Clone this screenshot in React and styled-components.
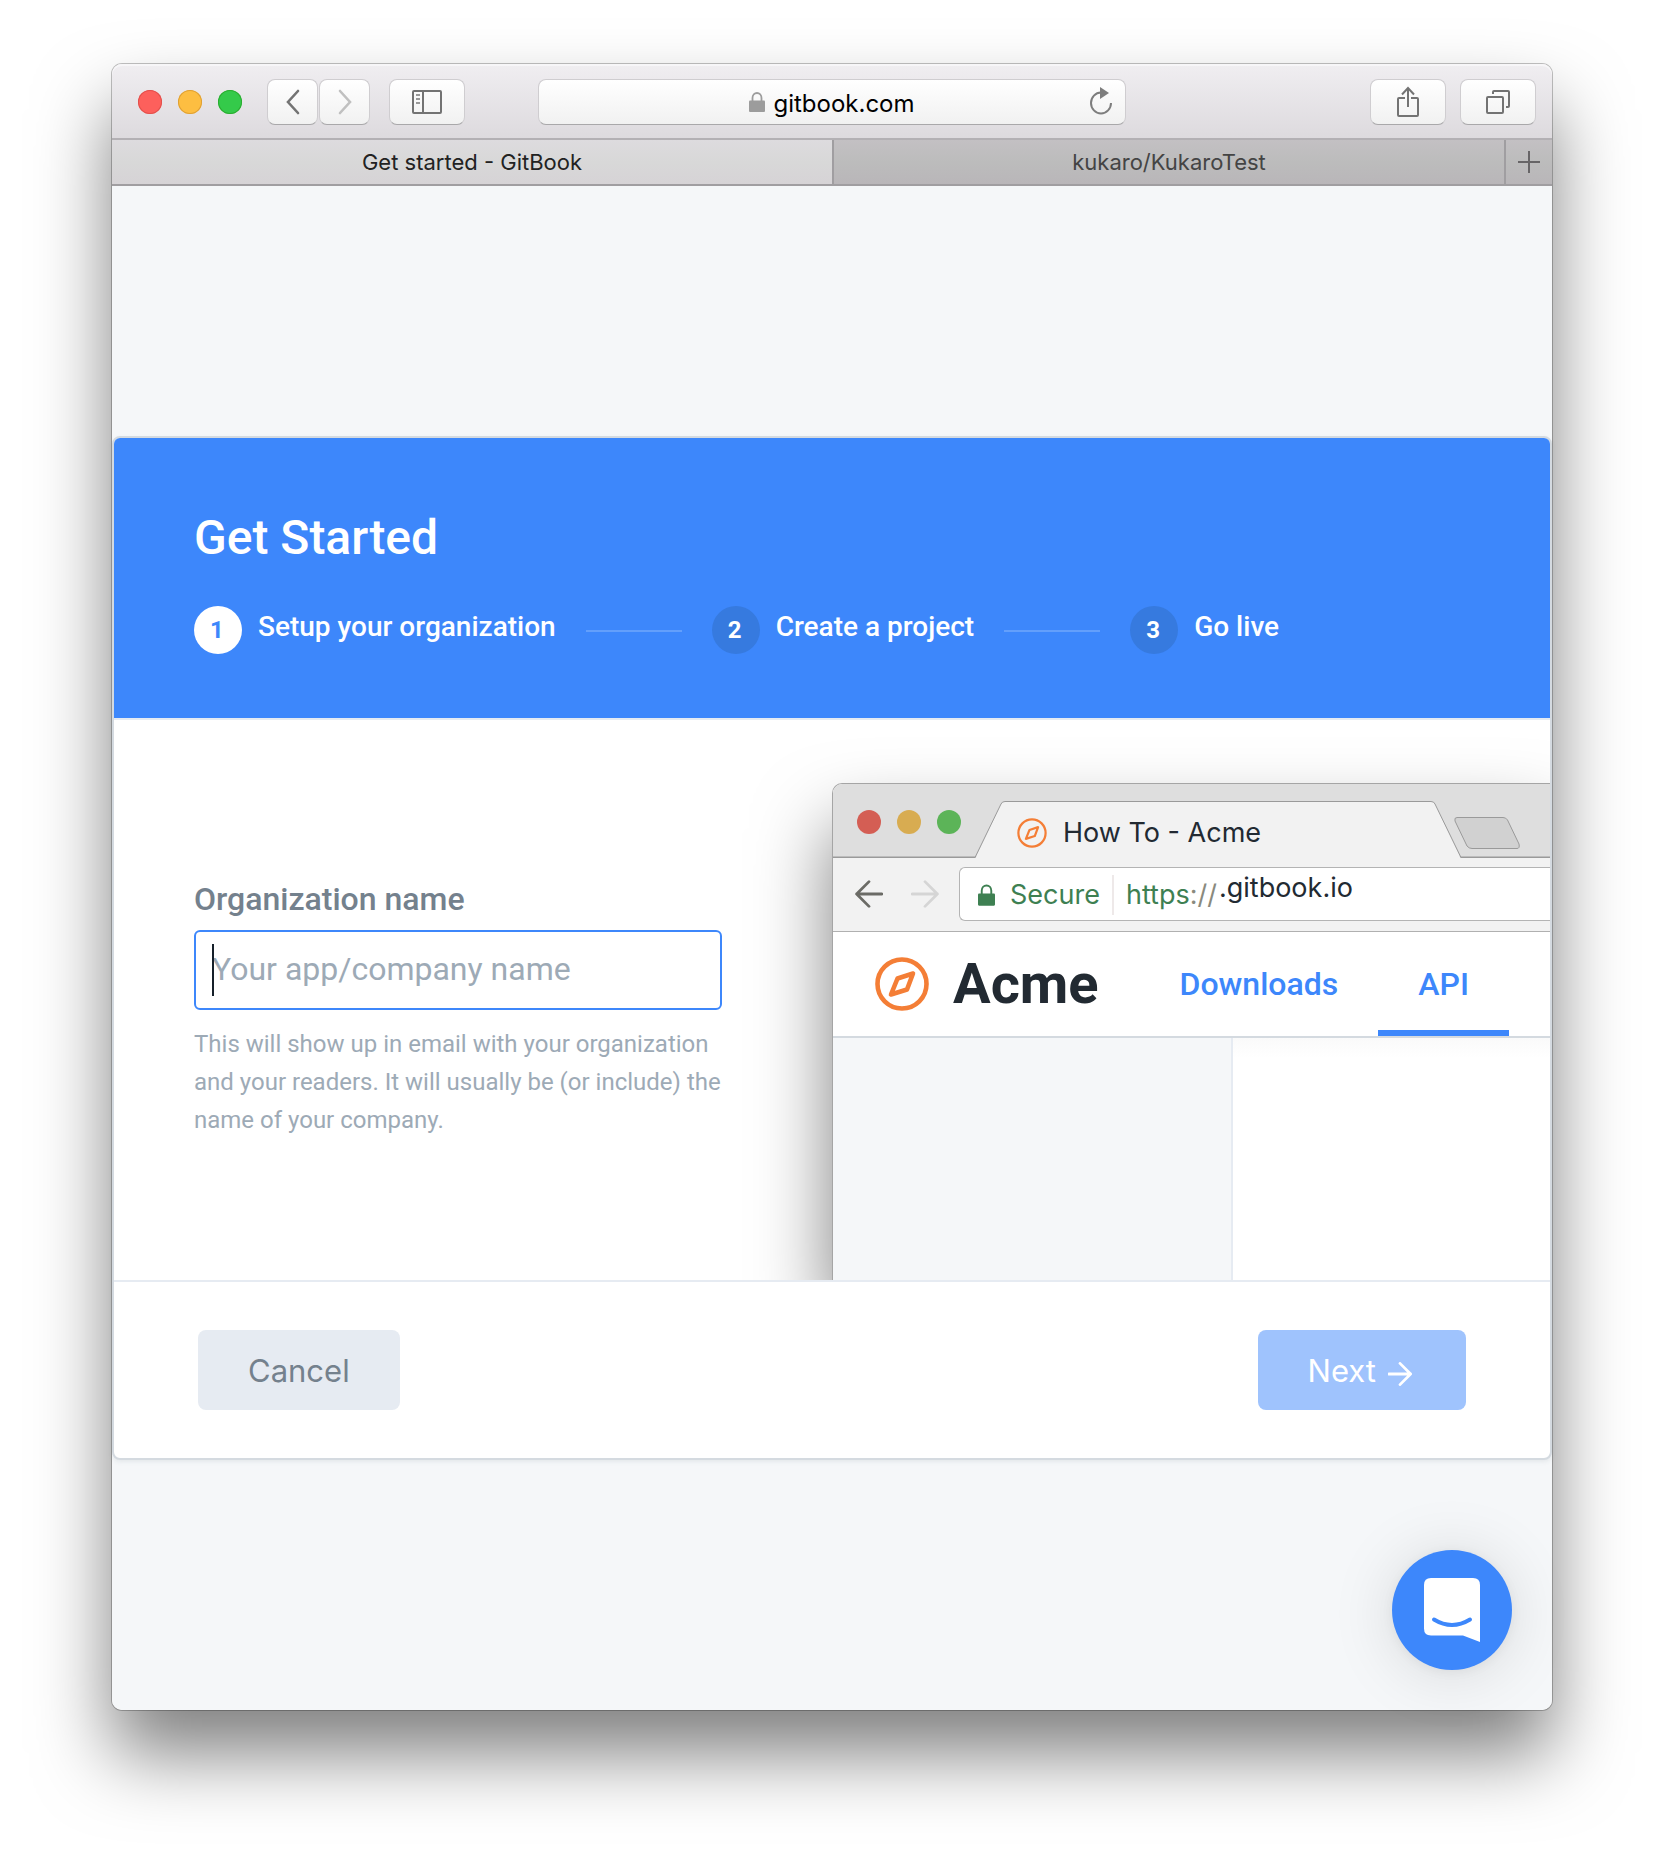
import React from "react";
import styled, { createGlobalStyle } from "styled-components";

const system = `Inter, "Liberation Sans", sans-serif`;
const roboto = `Roboto, "Liberation Sans", sans-serif`;
const blue = "#3d87fb";
const line = "#d4dae0";
const softLine = "#e6ebf2";
const windowShadow = "0 44px 76px rgba(0, 0, 0, 0.5)";

const GlobalStyle = createGlobalStyle`
  *, *::before, *::after { box-sizing: border-box; }
  body { margin: 0; background: #fff; font-family: ${roboto}; color: #222a32; }
  button { border: 0; padding: 0; margin: 0; font: inherit; color: inherit; background: none; cursor: pointer; }
  svg { display: block; flex: none; }
  ol { list-style: none; margin: 0; padding: 0; }
  h1, p { margin: 0; }
`;

/* ---------- desktop window ---------- */

const Desktop = styled.div`
  padding: 64px 112px 160px;
`;

const Window = styled.div`
  position: relative;
  border-radius: 10px;
  box-shadow: 0 0 0 1px rgba(0, 0, 0, 0.24), ${windowShadow};
`;

const Toolbar = styled.header`
  display: flex;
  align-items: center;
  height: 76px;
  padding: 2px 16px 0;
  border-radius: 10px 10px 0 0;
  border-bottom: 2px solid #b3b0b4;
  background: linear-gradient(#f0eef1, #dddade);
  box-shadow: inset 0 2px 0 #f7f6f8;
`;

const ToolbarSide = styled.div`
  flex: 1;
  display: flex;
  align-items: center;
  justify-content: ${(p) => (p.$end ? "flex-end" : "flex-start")};
  gap: ${(p) => (p.$end ? 14 : 0)}px;
`;

const Lights = styled.div`
  display: flex;
  gap: 16px;
  margin-left: 10px;
`;

const Light = styled.button`
  width: 24px;
  height: 24px;
  border-radius: 50%;
  background: ${(p) => p.$color};
  box-shadow: inset 0 0 0 1px ${(p) => p.$rim};
`;

const NavPair = styled.div`
  display: flex;
  gap: 1px;
  margin: 0 19px 0 25px;
`;

const ToolButton = styled.button`
  display: flex;
  align-items: center;
  justify-content: center;
  width: ${(p) => (p.$wide ? 76 : 51)}px;
  height: 46px;
  border: 1px solid #cfcdd0;
  border-bottom-color: #a9a8aa;
  border-radius: 8px;
  background: linear-gradient(#fff, #f1f1f1);
  color: ${(p) => (p.$dim ? "#c0c0c0" : "#737373")};
`;

const AddressBar = styled.div`
  position: relative;
  flex: 0 1 588px;
  display: flex;
  height: 46px;
  border: 1px solid #cfcdd0;
  border-bottom-color: #a9a8aa;
  border-radius: 8px;
  background: linear-gradient(#fff, #f1f1f1);
`;

const Address = styled.button`
  flex: 1;
  display: flex;
  align-items: center;
  justify-content: center;
  gap: 8px;
  color: #000;
  font: 400 24px/40px ${system};
`;

const AddressText = styled.span`
  padding-top: 4px;
`;

const Reload = styled.button`
  position: absolute;
  top: 0;
  right: 12px;
  height: 44px;
`;

const TabBar = styled.div`
  display: flex;
  height: 46px;
  border-bottom: 2px solid #a09ea1;
  background: linear-gradient(#c3c0c3, #bcbcbc 50%, #b9b6b9);
`;

const Tab = styled.button`
  flex: ${(p) => (p.$active ? "0 0 50%" : "1")};
  color: ${(p) => (p.$active ? "#222" : "#444")};
  background: ${(p) => (p.$active ? "linear-gradient(#dddbde, #d8d8d8 50%, #d6d3d6)" : "none")};
  border-left: ${(p) => (p.$active ? "0" : "2px solid #a09ea1")};
  font: 400 22px/44px ${system};
`;

const NewTab = styled.button`
  display: flex;
  align-items: center;
  justify-content: center;
  width: 48px;
  border-left: 2px solid #a09ea1;
`;

const Viewport = styled.main`
  padding: 250px 0;
  background: #f5f7f9;
  border-radius: 0 0 10px 10px;
`;

/* ---------- setup card ---------- */

const Card = styled.form`
  border: 2px solid ${line};
  border-radius: 8px;
  background: #fff;
  overflow: hidden;
  box-shadow: 0 2px 4px rgba(116, 129, 141, 0.12);
`;

const Hero = styled.div`
  height: 282px;
  padding: 68px 80px 0;
  background: ${blue};
  border-bottom: 2px solid ${softLine};
  color: #fff;
`;

const Title = styled.h1`
  font: 500 48px/64px ${roboto};
`;

const Steps = styled.ol`
  display: flex;
  align-items: center;
  margin-top: 36px;
`;

const Step = styled.li`
  display: flex;
  align-items: center;

  & + &::before {
    content: "";
    width: 96px;
    height: 2px;
    margin: 2px 30px 0;
    background: rgba(255, 255, 255, 0.2);
  }
`;

const StepNumber = styled.span`
  width: 48px;
  height: 48px;
  margin-right: 16px;
  padding-right: 2px;
  border-radius: 50%;
  background: ${(p) => (p.$current ? "#fff" : "#367adf")};
  color: ${(p) => (p.$current ? blue : "#fff")};
  text-align: center;
  font: 700 24px/48px ${roboto};
`;

const StepLabel = styled.span`
  padding-bottom: 6px;
  font: 500 28px/40px ${roboto};
`;

const Body = styled.div`
  display: flex;
  height: 560px;
  overflow: hidden;
`;

const FormColumn = styled.div`
  flex: none;
  width: 50%;
  padding: 156px 110px 0 80px;
`;

const Label = styled.label`
  display: block;
  color: #74818d;
  font: 500 32px/46px ${roboto};
`;

const Field = styled.div`
  position: relative;
  margin-top: 8px;
`;

const TextInput = styled.input`
  display: block;
  width: 100%;
  height: 80px;
  padding: 0 16px 2px;
  border: 2px solid ${blue};
  border-radius: 6px;
  outline: 0;
  background: #fff;
  color: #222a32;
  caret-color: transparent;
  font: 400 32px/48px ${roboto};

  &::placeholder {
    color: #9daab6;
    opacity: 1;
  }
`;

const Caret = styled.span`
  position: absolute;
  left: 18px;
  top: 14px;
  width: 2px;
  height: 52px;
  background: #16202a;
`;

const Help = styled.p`
  margin-top: 15px;
  color: #9daab6;
  font: 400 24px/38px ${roboto};
`;

const Footer = styled.div`
  display: flex;
  align-items: center;
  justify-content: space-between;
  height: 178px;
  padding: 0 84px;
  border-top: 2px solid ${softLine};
`;

const ActionButton = styled.button`
  display: flex;
  align-items: center;
  gap: 12px;
  height: 80px;
  padding: 2px 50px 0;
  border-radius: 8px;
  background: ${(p) => (p.$primary ? "#9fc3fd" : softLine)};
  color: ${(p) => (p.$primary ? "#fff" : "#74818d")};
  font: 400 31px/40px ${system};

  svg { margin: 6px 4px 0 0; }
`;

/* ---------- preview browser ---------- */

const Preview = styled.div`
  flex: 1 0 auto;
  width: 50%;
  margin-top: 63px;
  border: 1px solid #a5a5a5;
  border-width: 1px 0 0 1px;
  border-radius: 10px 0 0 0;
  background: #fff;
  box-shadow: ${windowShadow};
`;

const PreviewTabs = styled.div`
  display: flex;
  height: 74px;
  border-radius: 9px 0 0 0;
  background: linear-gradient(#dedede, #dedede 72px, #9a9a9a 73px);
`;

const PreviewLights = styled.div`
  display: flex;
  gap: 16px;
  padding: 26px 0 0 24px;
`;

const Dot = styled.span`
  width: 24px;
  height: 24px;
  border-radius: 50%;
  background: ${(p) => p.$color};
`;

const PreviewTab = styled.div`
  position: relative;
  width: 486px;
  height: 74px;
  margin-left: 14px;
`;

const TabShape = styled.svg`
  position: absolute;
  inset: 0;
`;

const TabTitle = styled.div`
  position: relative;
  display: flex;
  align-items: center;
  gap: 16px;
  padding: 31px 0 0 42px;
  font: 400 27px/36px ${system};
`;

const GhostTab = styled.svg`
  margin: 32px 0 0 -8px;
`;

const PreviewToolbar = styled.div`
  display: flex;
  align-items: center;
  gap: 28px;
  height: 74px;
  padding: 0 0 2px 22px;
  border-bottom: 1px solid #b0b0b0;
  background: #f2f2f2;
`;

const PreviewUrl = styled.div`
  flex: 1;
  display: flex;
  align-items: center;
  height: 54px;
  margin-left: -8px;
  padding: 2px 0 0 18px;
  border: 1px solid #b4b4b4;
  border-right: 0;
  border-radius: 6px 0 0 6px;
  background: #fff;
  font: 400 27px/40px ${system};
`;

const Secure = styled.span`
  margin-left: 15px;
  padding-right: 12px;
  border-right: 2px solid #eee9e9;
  color: #3e8052;
`;

const Scheme = styled.span`
  margin-left: 12px;
  color: #3e8052;

  i { font-style: normal; color: #8a8a7e; }
`;

const Host = styled.span`
  padding: 0 0 14px 2px;
`;

const Site = styled.div`
  display: flex;
  align-items: stretch;
  height: 106px;
  padding-left: 42px;
  border-bottom: 2px solid ${line};
`;

const Brand = styled.div`
  display: flex;
  align-items: center;
  gap: 24px;
  margin-right: 41px;
  font: 700 56px/104px ${roboto};
`;

const SiteLink = styled.a`
  padding: 0 40px;
  border-bottom: 6px solid ${(p) => (p.$active ? blue : "transparent")};
  color: ${blue};
  text-decoration: none;
  font: 500 32px/104px ${roboto};
`;

const SiteBody = styled.div`
  display: flex;
  height: 260px;
`;

const SiteNav = styled.div`
  flex: none;
  width: 400px;
  background: #f5f7f9;
  border-right: 2px solid ${softLine};
`;

const SitePage = styled.div`
  flex: 1;
  background: linear-gradient(#fafafa, #fff 20px);
`;

const ChatButton = styled.button`
  position: absolute;
  right: 40px;
  bottom: 40px;
  width: 120px;
  height: 120px;
  border-radius: 50%;
  background: ${blue};
  box-shadow: 0 2px 12px rgba(0, 0, 0, 0.05), 0 4px 64px rgba(0, 0, 0, 0.13);
`;

/* ---------- drawings ---------- */

const Chevron = ({ flip }) => (
  <svg width="14" height="26" viewBox="0 0 14 26" fill="none" stroke="currentColor" strokeWidth="2.6" strokeLinecap="round">
    <path d={flip ? "M2 2 12 13 2 24" : "M12 2 2 13 12 24"} />
  </svg>
);

const SidebarIcon = () => (
  <svg width="30" height="24" viewBox="0 0 30 24" fill="none" stroke="currentColor" strokeWidth="2">
    <rect x="1" y="1" width="28" height="22" rx="1" />
    <path d="M11 1V23" />
    <path d="M4 5H8M4 9H8M4 13H8" stroke="#999" />
  </svg>
);

const ShareIcon = () => (
  <svg width="24" height="32" viewBox="0 0 24 32" fill="none" stroke="currentColor" strokeWidth="2">
    <path d="M9 12H3Q2 12 2 13V29Q2 30 3 30H21Q22 30 22 29V13Q22 12 21 12H15" />
    <path d="M12 21V2M6 8.500 12 2 18 8.500" />
  </svg>
);

const WindowsIcon = () => (
  <svg width="26" height="26" viewBox="0 0 26 26" fill="none" stroke="currentColor" strokeWidth="2">
    <rect x="2" y="8" width="16" height="16" rx="1" />
    <path d="M8 5V3Q8 2 9 2H23Q24 2 24 3V17Q24 18 23 18H21" />
  </svg>
);

const LockIcon = ({ width, height, color }) => (
  <svg width={width} height={height} viewBox="0 0 16 20">
    <path d="M3.500 9V6a4.500 5 0 0 1 9 0V9" fill="none" stroke={color} strokeWidth="1.800" />
    <rect y="8.500" width="16" height="11.500" rx="1" fill={color} />
  </svg>
);

const ReloadIcon = () => (
  <svg width="24" height="32" viewBox="0 0 24 32">
    <path d="M12 6.500A10 10.500 0 1 0 22 17" fill="none" stroke="#7d7d7d" strokeWidth="2" />
    <path d="M11 1 20 7 11 13Z" fill="#7d7d7d" />
  </svg>
);

const PlusIcon = () => (
  <svg width="22" height="22" viewBox="0 0 22 22" stroke="#676567" strokeWidth="2">
    <path d="M0 11H22M11 0V22" />
  </svg>
);

const Compass = ({ size, weight }) => (
  <svg width={size} height={size} viewBox="0 0 54 54" fill="none" stroke="#f47e36" strokeWidth={weight} strokeLinejoin="round">
    <circle cx="27" cy="27" r="24.500" />
    <path d="M38 16.500 22.500 21.500 16 37.500 32 32.500Z" />
  </svg>
);

const Arrow = ({ size, color, left, weight = 2.6 }) => (
  <svg width={size} height={size} viewBox="0 0 26 26" fill="none" stroke={color} strokeWidth={weight} strokeLinecap="round" strokeLinejoin="round">
    <path d={left ? "M25 13H1.500M13 1.500 1.500 13 13 24.500" : "M1 13H24.500M13 1.500 24.500 13 13 24.500"} />
  </svg>
);

const ChatIcon = () => (
  <svg width="120" height="120" viewBox="0 0 120 120">
    <path d="M39 28H81Q88 28 88 35V92L71 85.500H39Q32 85.500 32 78.500V35Q32 28 39 28Z" fill="#fff" />
    <path d="M42 69.500Q60 80.500 78 69.500" fill="none" stroke={blue} strokeWidth="4" strokeLinecap="round" />
  </svg>
);

const steps = ["Setup your organization", "Create a project", "Go live"];

export default function App() {
  return (
    <Desktop>
      <GlobalStyle />
      <Window>
        <Toolbar>
          <ToolbarSide>
            <Lights>
              <Light type="button" aria-label="Close" $color="#fd605c" $rim="#e2504c" />
              <Light type="button" aria-label="Minimize" $color="#fdbe41" $rim="#dfa034" />
              <Light type="button" aria-label="Zoom" $color="#34ca4a" $rim="#2bac2f" />
            </Lights>
            <NavPair>
              <ToolButton type="button" aria-label="Back"><Chevron /></ToolButton>
              <ToolButton type="button" aria-label="Forward" $dim><Chevron flip /></ToolButton>
            </NavPair>
            <ToolButton type="button" aria-label="Sidebar" $wide><SidebarIcon /></ToolButton>
          </ToolbarSide>
          <AddressBar>
            <Address type="button">
              <LockIcon width={16} height={20} color="#9c9c9c" />
              <AddressText>gitbook.com</AddressText>
            </Address>
            <Reload type="button" aria-label="Reload"><ReloadIcon /></Reload>
          </AddressBar>
          <ToolbarSide $end>
            <ToolButton type="button" aria-label="Share" $wide><ShareIcon /></ToolButton>
            <ToolButton type="button" aria-label="Show tabs" $wide><WindowsIcon /></ToolButton>
          </ToolbarSide>
        </Toolbar>

        <TabBar>
          <Tab type="button" $active>Get started - GitBook</Tab>
          <Tab type="button">kukaro/KukaroTest</Tab>
          <NewTab type="button" aria-label="New tab"><PlusIcon /></NewTab>
        </TabBar>

        <Viewport>
          <Card onSubmit={(e) => e.preventDefault()}>
            <Hero>
              <Title>Get Started</Title>
              <Steps>
                {steps.map((label, i) => (
                  <Step key={label}>
                    <StepNumber $current={i === 0}>{i + 1}</StepNumber>
                    <StepLabel>{label}</StepLabel>
                  </Step>
                ))}
              </Steps>
            </Hero>

            <Body>
              <FormColumn>
                <Label htmlFor="organization">Organization name</Label>
                <Field>
                  <TextInput id="organization" type="text" placeholder="Your app/company name" aria-describedby="organization-help" />
                  <Caret />
                </Field>
                <Help id="organization-help">
                  This will show up in email with your organization and your readers. It will usually be (or include) the name of your company.
                </Help>
              </FormColumn>

              <Preview>
                <PreviewTabs>
                  <PreviewLights>
                    <Dot $color="#d45e54" />
                    <Dot $color="#d8ac51" />
                    <Dot $color="#5cb458" />
                  </PreviewLights>
                  <PreviewTab>
                    <TabShape width="486" height="74" viewBox="0 0 486 74">
                      <path d="M0 74 1 73 26 20Q27 17.500 30 17.500H456Q459 17.500 460 20L485 73 486 74Z" fill="#f2f2f2" />
                      <path d="M0 73.500 26 20Q27 17.500 30 17.500H456Q459 17.500 460 20L486 73.500" fill="none" stroke="#9a9a9a" />
                    </TabShape>
                    <TabTitle>
                      <Compass size={30} weight={4} />
                      How To - Acme
                    </TabTitle>
                  </PreviewTab>
                  <GhostTab width="68" height="34" viewBox="0 0 68 34">
                    <path d="M4 1.500H50Q53 1.500 54.500 4L66 28Q67 32.500 64 32.500H19Q16 32.500 14 30L2 5Q1 1.500 4 1.500Z" fill="#d1d1d1" stroke="#9a9a9a" />
                  </GhostTab>
                </PreviewTabs>
                <PreviewToolbar>
                  <Arrow size={28} color="#6b6b66" left />
                  <Arrow size={28} color="#d5d5d5" />
                  <PreviewUrl>
                    <LockIcon width={17} height={22} color="#3e8052" />
                    <Secure>Secure</Secure>
                    <Scheme>https<i>://</i></Scheme>
                    <Host>.gitbook.io</Host>
                  </PreviewUrl>
                </PreviewToolbar>
                <Site>
                  <Brand>
                    <Compass size={54} weight={4.6} />
                    Acme
                  </Brand>
                  <SiteLink href="#downloads">Downloads</SiteLink>
                  <SiteLink href="#api" $active>API</SiteLink>
                </Site>
                <SiteBody>
                  <SiteNav />
                  <SitePage />
                </SiteBody>
              </Preview>
            </Body>

            <Footer>
              <ActionButton type="button">Cancel</ActionButton>
              <ActionButton type="submit" $primary>
                Next
                <Arrow size={24} color="#fff" weight={3} />
              </ActionButton>
            </Footer>
          </Card>
        </Viewport>

        <ChatButton type="button" aria-label="Open chat"><ChatIcon /></ChatButton>
      </Window>
    </Desktop>
  );
}
